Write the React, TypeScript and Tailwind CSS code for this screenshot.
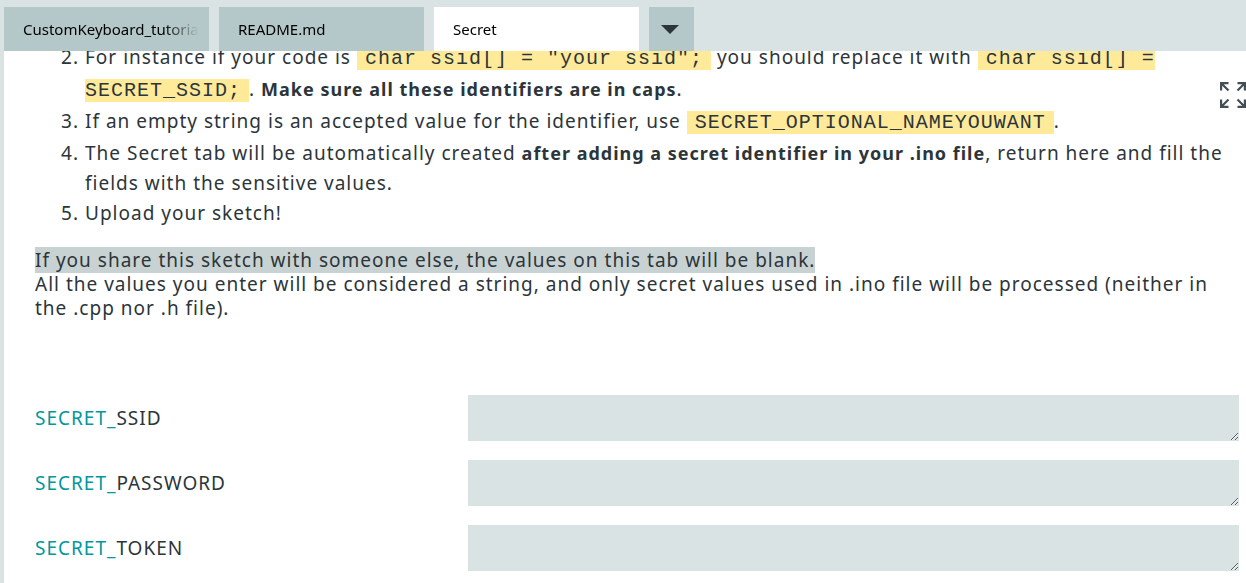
import type { ReactNode } from "react";

type Tab = { name: string; active?: boolean };

const tabs: Tab[] = [
  { name: "CustomKeyboard_tutorial.ino" },
  { name: "README.md" },
  { name: "Secret", active: true },
];

const secrets = ["SSID", "PASSWORD", "TOKEN"];

function Code({ children }: { children: ReactNode }) {
  return (
    <code className="bg-[#ffea9a] px-2 font-['Liberation_Mono',monospace] text-xl/[30px]">
      {children}
    </code>
  );
}

function Strong({ children }: { children: ReactNode }) {
  return <strong className="text-lg/[30px] font-bold">{children}</strong>;
}

function TabBar() {
  return (
    <header className="relative z-10 flex gap-2.5 bg-[#dae3e3] pt-[7px] pl-1 text-[15px] text-black">
      <div role="tablist" className="flex gap-2.5">
        {tabs.map((tab) => (
          <button
            key={tab.name}
            type="button"
            role="tab"
            aria-selected={!!tab.active}
            className={`flex h-11 w-[205px] items-center pr-2.5 pl-[19px] text-left ${
              tab.active ? "bg-white" : "bg-[#b5c8c9]"
            }`}
          >
            <span className="w-full overflow-hidden whitespace-nowrap mask-r-from-80% mask-r-to-100%">
              {tab.name}
            </span>
          </button>
        ))}
      </div>
      <button
        type="button"
        aria-label="Tab menu"
        className="flex h-11 w-[45px] items-center justify-center bg-[#b5c8c9] pr-1"
      >
        <svg width="18" height="9" viewBox="0 0 18 9" className="fill-[#2c353a]">
          <path d="M0 0h18L9 9z" />
        </svg>
      </button>
    </header>
  );
}

function SecretField({ name }: { name: string }) {
  const id = `secret-${name.toLowerCase()}`;
  return (
    <div className="flex items-center">
      <label htmlFor={id} className="w-[36%] shrink-0">
        <span className="text-[#00979d]">SECRET_</span>
        {name}
      </label>
      <textarea
        id={id}
        rows={1}
        className="block h-[46px] min-w-0 flex-1 resize bg-[#dae3e3] p-2 outline-none"
      />
    </div>
  );
}

export default function App() {
  return (
    <div className="flex h-screen flex-col overflow-hidden bg-[#dae3e3] font-['Noto_Sans',sans-serif] text-[19px]/6 text-[#2c353a]">
      <TabBar />
      <main className="relative ml-1 min-h-0 flex-1 overflow-hidden bg-white pr-[7px] pl-[31px] tracking-[1px]">
        <ol start={2} className="-mt-[9px] list-decimal pl-[50px] leading-[30px]">
          <li>
            For instance if your code is <Code>char ssid[] = "your ssid";</Code> you should replace
            it with <Code>char ssid[] = SECRET_SSID;</Code>.{" "}
            <Strong>Make sure all these identifiers are in caps</Strong>.
          </li>
          <li>
            If an empty string is an accepted value for the identifier, use{" "}
            <Code>SECRET_OPTIONAL_NAMEYOUWANT</Code>.
          </li>
          <li>
            The Secret tab will be automatically created{" "}
            <Strong>after adding a secret identifier in your .ino file</Strong>, return here and
            fill the fields with the sensitive values.
          </li>
          <li>Upload your sketch!</li>
        </ol>
        <p className="mt-5">
          <mark className="bg-[#c9d2d2] text-inherit">
            If you share this sketch with someone else, the values on this tab will be blank.
          </mark>
          <br />
          All the values you enter will be considered a string, and only secret values used in .ino
          file will be processed (neither in the .cpp nor .h file).
        </p>
        <form className="mt-[75px] flex flex-col gap-[19px]">
          {secrets.map((name) => (
            <SecretField key={name} name={name} />
          ))}
        </form>
        <button type="button" aria-label="Full screen" className="absolute top-[31px] right-0">
          <svg
            width="26"
            height="26"
            viewBox="0 0 26 26"
            fill="none"
            stroke="#434f54"
            strokeWidth="2.2"
          >
            <path d="M1.1 8.5V1.1H8.5M1.5 1.5l7 7M17.5 1.1h7.4V8.5M24.5 1.5l-7 7M1.1 17.5v7.4H8.5M1.5 24.5l7-7M17.5 24.9h7.4V17.5M24.5 24.5l-7-7" />
          </svg>
        </button>
      </main>
    </div>
  );
}
